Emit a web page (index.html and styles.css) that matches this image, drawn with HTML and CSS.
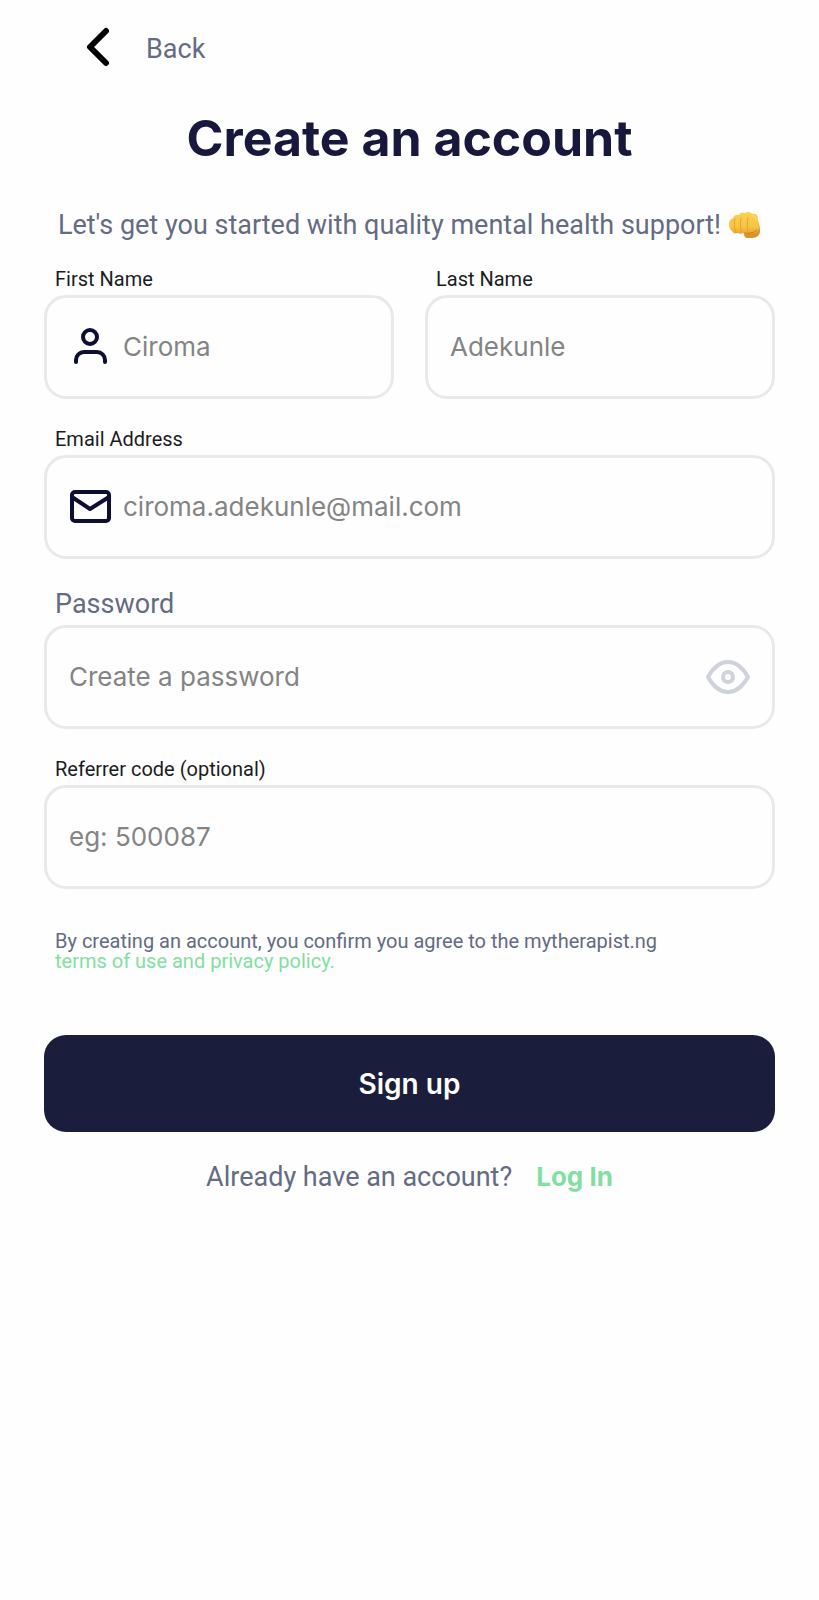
FILE: index.html
```html
<!DOCTYPE html>
<html lang="en">
<head>
<meta charset="utf-8">
<meta name="viewport" content="width=device-width, initial-scale=1">
<title>Create an account</title>
<link rel="stylesheet" href="styles.css">
</head>
<body>
<main class="page">
  <a class="back" href="#">
    <svg class="back-icon" viewBox="0 0 24 40" fill="none" aria-hidden="true"><path d="M20 4 4 20 20 36" stroke="currentColor" stroke-width="6" stroke-linecap="round" stroke-linejoin="round"/></svg>
    <span>Back</span>
  </a>
  <h1 class="title">Create an account</h1>
  <p class="intro">
    <span>Let's get you started with quality mental health support!</span>
    <svg class="fist" viewBox="0 0 32 28" role="img" aria-label="Fist">
      <defs>
        <linearGradient id="skin" x1="0" y1="0" x2="0" y2="1"><stop offset="0" stop-color="#fbd052"/><stop offset=".65" stop-color="#f8c443"/><stop offset="1" stop-color="#e5a12b"/></linearGradient>
      </defs>
      <path d="M15 20 27 8c3 3 4 8 4 12 0 4-3 7-8 7h-5c-2 0-3-2-3-4z" fill="#d9952b"/>
      <path d="M4 7c1-3 4-4 6-3 1-3 5-3 6-2 3-2 6-1 7 1 4-1 6 1 6 5l1 9c0 4-3 6-6 5l-5 1c-2 1-4 0-5-1-2 1-4 1-5 0-3 1-5 0-6-2-2-1-3-4-3-7 0-3 1-5 4-6z" fill="url(#skin)"/>
      <path d="M6 8c-1 4-1 9 1 13M12 7c-1 5-1 10 1 15M19 7c-1 5-1 10 0 14" fill="none" stroke="#e0a236" stroke-linecap="round"/>
      <path d="M16 22c4 1 9 0 12-3" fill="none" stroke="#c67d24" stroke-linecap="round"/>
      <path d="M23 5c3-1 4 1 4 4" fill="none" stroke="#ffe184" stroke-linecap="round"/>
    </svg>
  </p>

  <form class="form">
    <div class="names">
      <div class="field">
        <label class="label" for="first">First Name</label>
        <div class="box">
          <svg class="icon" viewBox="0 0 42 42" fill="none" stroke="currentColor" stroke-width="4" stroke-linecap="round" aria-hidden="true"><circle cx="21" cy="11" r="7"/><path d="M7 36v-2a8 8 0 0 1 8-8h13a8 8 0 0 1 8 8v2"/></svg>
          <input class="input" id="first" type="text" placeholder="Ciroma">
        </div>
      </div>
      <div class="field">
        <label class="label" for="last">Last Name</label>
        <div class="box"><input class="input" id="last" type="text" placeholder="Adekunle"></div>
      </div>
    </div>
    <div class="field">
      <label class="label" for="email">Email Address</label>
      <div class="box">
        <svg class="icon" viewBox="0 0 42 42" fill="none" stroke="currentColor" stroke-width="4" stroke-linecap="round" stroke-linejoin="round" aria-hidden="true"><rect x="3" y="6" width="37" height="29" rx="3"/><path d="m3 11 18 12 19-12"/></svg>
        <input class="input" id="email" type="email" placeholder="ciroma.adekunle@mail.com">
      </div>
    </div>
    <div class="field">
      <label class="label label-large" for="password">Password</label>
      <div class="box">
        <input class="input" id="password" type="password" placeholder="Create a password">
        <button class="reveal" type="button" aria-label="Show password">
          <svg class="eye" viewBox="0 0 44 34" fill="none" stroke="currentColor" stroke-width="4" stroke-linejoin="round"><path d="M2 17C7 8 14 2 22 2s15 6 20 15c-5 9-12 15-20 15S7 26 2 17Z"/><circle cx="22" cy="17" r="5"/></svg>
        </button>
      </div>
    </div>
    <div class="field">
      <label class="label" for="code">Referrer code (optional)</label>
      <div class="box"><input class="input" id="code" type="text" placeholder="eg: 500087"></div>
    </div>
    <p class="terms">By creating an account, you confirm you agree to the mytherapist.ng<br><a class="terms-link" href="#">terms of use and privacy policy.</a></p>
    <button class="submit" type="submit">Sign up</button>
  </form>
  <p class="login"><span>Already have an account?</span><a class="login-link" href="#">Log In</a></p>
</main>
</body>
</html>
```
FILE: styles.css
```css
* { box-sizing: border-box; }

body {
  margin: 0;
  background: #fefefe;
  color: #646b82;
  font-family: Roboto, "Liberation Sans", sans-serif;
  font-size: 27px;
}

h1, p { margin: 0; }
a { color: inherit; text-decoration: none; }

.page { padding: 26px 44px; }

.back {
  display: flex;
  width: fit-content;
  align-items: center;
  gap: 36px;
  margin-left: 42px;
  height: 42px;
}

.back-icon { width: 24px; height: 40px; color: #000; }
.back span { line-height: 32px; padding-top: 4px; }

.title {
  margin-top: 40px;
  color: #17183b;
  font-family: Inter, sans-serif;
  font-size: 50px;
  font-weight: 700;
  line-height: 60px;
  text-align: center;
}

.intro {
  display: flex;
  justify-content: center;
  align-items: center;
  gap: 8px;
  margin-top: 39px;
  line-height: 36px;
}

.fist { flex: none; width: 32px; height: 28px; }

.form {
  display: flex;
  flex-direction: column;
  gap: 28px;
  margin-top: 24px;
}

.names {
  display: grid;
  grid-template-columns: 1fr 1fr;
  gap: 31px;
}

.field { display: flex; flex-direction: column; gap: 4px; min-width: 0; }

.label {
  padding-left: 11px;
  color: #1c1c1e;
  font-size: 20px;
  line-height: 24px;
}

.label-large { color: #646b82; font-size: 27px; line-height: 34px; }

.box {
  display: flex;
  align-items: center;
  gap: 12px;
  height: 104px;
  padding: 0 22px;
  border: 3px solid #e8e9ec;
  border-radius: 22px;
}

.icon { flex: none; width: 42px; height: 42px; color: #0e0e33; }

.input {
  flex: 1;
  min-width: 0;
  padding: 0;
  border: 0;
  outline: 0;
  background: none;
  color: #17183b;
  font-family: Inter, sans-serif;
  font-size: 26px;
  line-height: 32px;
}

.input::placeholder { color: #848484; opacity: 1; }

.reveal { flex: none; padding: 0; border: 0; background: none; color: #cfd2db; }
.eye { display: block; width: 44px; height: 34px; }

.terms {
  margin-top: 14px;
  padding-left: 11px;
  font-size: 20px;
  line-height: 20px;
}

.terms-link { color: #83dea2; }

.submit {
  height: 97px;
  margin-top: 36px;
  border: 0;
  border-radius: 22px;
  background: #1b1d3c;
  color: #fff;
  font-family: Inter, sans-serif;
  font-size: 28px;
  font-weight: 600;
}

.login {
  display: flex;
  justify-content: center;
  gap: 24px;
  margin-top: 27px;
  line-height: 36px;
}

.login-link {
  color: #83dea2;
  font-family: Inter, sans-serif;
  font-size: 26px;
  font-weight: 700;
}
```
